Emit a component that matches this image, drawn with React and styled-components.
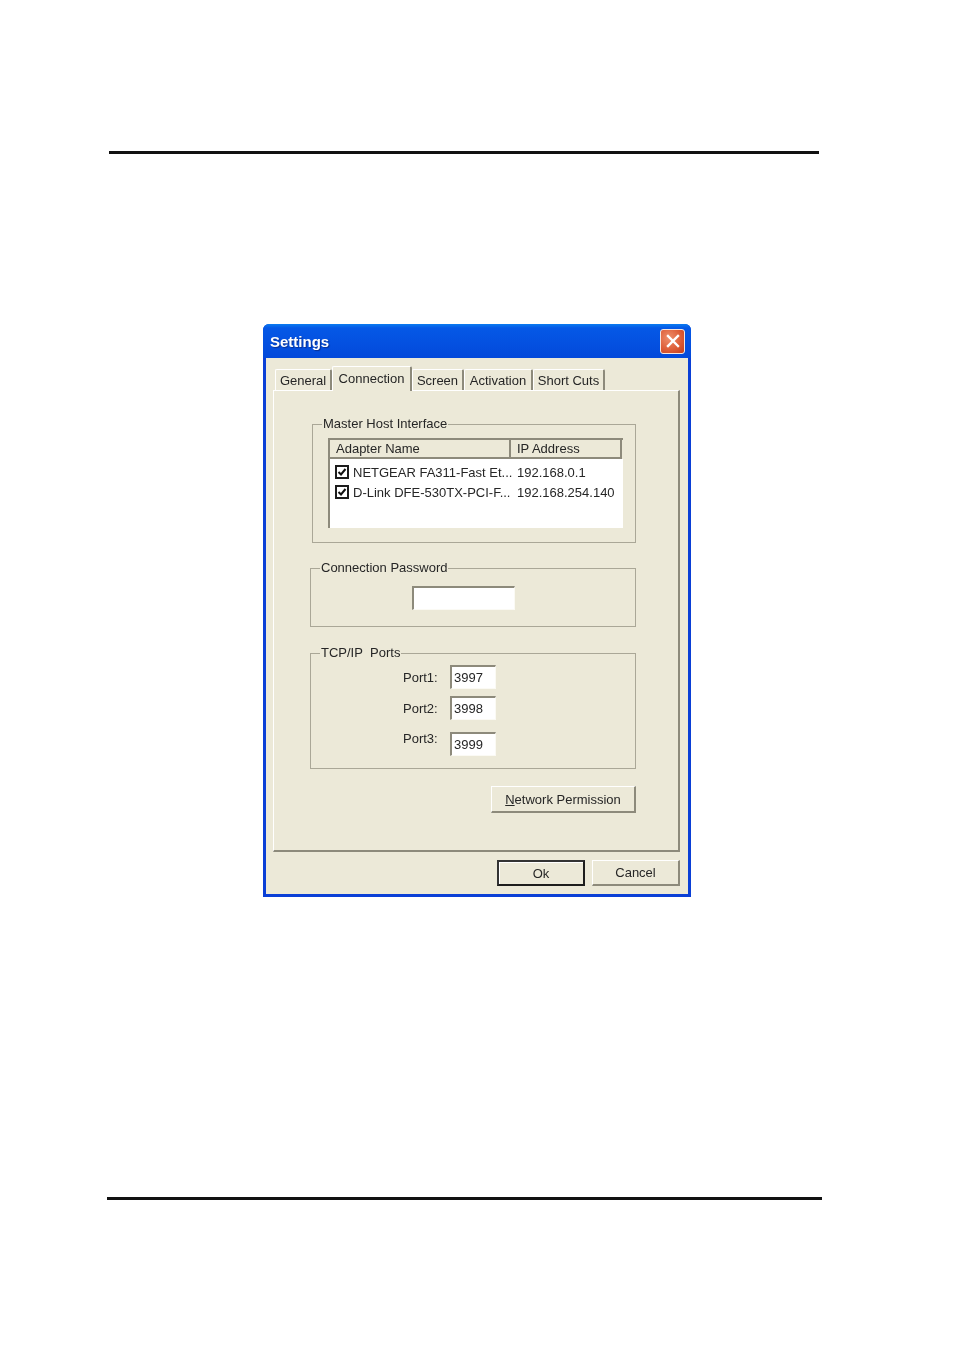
import styled, { createGlobalStyle } from "styled-components"

const GlobalStyle = createGlobalStyle`
  html, body {
    margin: 0;
    background: #fff;
  }
  * {
    box-sizing: border-box;
  }
`

const face = "#ece9d8"
const shade = "#8d8a7b"
const line = "#aaa797"
const ink = "#262626"

const tabs = [
  { name: "General", width: 57 },
  { name: "Connection", width: 80, active: true },
  { name: "Screen", width: 52 },
  { name: "Activation", width: 69 },
  { name: "Short Cuts", width: 72 },
]

const adapters = [
  { name: "NETGEAR FA311-Fast Et...", ip: "192.168.0.1" },
  { name: "D-Link DFE-530TX-PCI-F...", ip: "192.168.254.140" },
]

const ports = [
  { name: "Port1:", value: "3997", gap: 0, lift: 0 },
  { name: "Port2:", value: "3998", gap: 7, lift: 0 },
  { name: "Port3:", value: "3999", gap: 11, lift: 10 },
]

export default function App() {
  return (
    <Styled.Page>
      <GlobalStyle />
      <Styled.TopRule />
      <Styled.Dialog>
        <Styled.TitleBar>
          <Styled.Title>Settings</Styled.Title>
          <Styled.CloseButton>
            <svg width="14" height="14" viewBox="0 0 14 14">
              <path d="M2 2 L12 12 M12 2 L2 12" stroke="#fff" strokeWidth="2.4" strokeLinecap="square" />
            </svg>
          </Styled.CloseButton>
        </Styled.TitleBar>
        <Styled.Body>
          <Styled.TabRow>
            {tabs.map((tab) => (
              <Styled.Tab key={tab.name} $active={tab.active} $width={tab.width}>
                {tab.name}
              </Styled.Tab>
            ))}
          </Styled.TabRow>
          <Styled.Panel>
            <Styled.Group $left={38} $width={324} $height={127}>
              <Styled.Legend $left={9}>Master Host Interface</Styled.Legend>
              <Styled.ListView>
                <Styled.ListHeader>
                  <Styled.HeaderCell $width={181}>Adapter Name</Styled.HeaderCell>
                  <Styled.HeaderCell $width={111}>IP Address</Styled.HeaderCell>
                </Styled.ListHeader>
                {adapters.map((adapter) => (
                  <Styled.ListRow key={adapter.ip}>
                    <Styled.CheckBox>
                      <svg width="10" height="10" viewBox="0 0 10 10">
                        <path d="M1.5 5 L4 7.5 L8.5 2" fill="none" stroke="#111" strokeWidth="2" />
                      </svg>
                    </Styled.CheckBox>
                    <Styled.AdapterName>{adapter.name}</Styled.AdapterName>
                    <span>{adapter.ip}</span>
                  </Styled.ListRow>
                ))}
              </Styled.ListView>
            </Styled.Group>
            <Styled.Group $left={36} $width={326} $height={67} $top={17}>
              <Styled.Legend $left={9}>Connection Password</Styled.Legend>
              <Styled.PasswordField readOnly value="" />
            </Styled.Group>
            <Styled.Group $left={36} $width={326} $height={124} $top={18}>
              <Styled.Legend $left={9}>TCP/IP&nbsp; Ports</Styled.Legend>
              <Styled.PortList>
                {ports.map((port) => (
                  <Styled.PortRow key={port.name} $gap={port.gap}>
                    <Styled.PortLabel $lift={port.lift}>{port.name}</Styled.PortLabel>
                    <Styled.PortField readOnly value={port.value} />
                  </Styled.PortRow>
                ))}
              </Styled.PortList>
            </Styled.Group>
            <Styled.PermissionRow>
              <Styled.Button $width={145} $height={27}>
                <u>N</u>etwork Permission
              </Styled.Button>
            </Styled.PermissionRow>
          </Styled.Panel>
          <Styled.Footer>
            <Styled.DefaultButton>Ok</Styled.DefaultButton>
            <Styled.Button $width={88} $height={26}>Cancel</Styled.Button>
          </Styled.Footer>
        </Styled.Body>
      </Styled.Dialog>
      <Styled.BottomRule />
    </Styled.Page>
  )
}

const Styled = {
  Page: styled.div`
    width: 954px;
    height: 1351px;
    padding-top: 151px;
    overflow: hidden;
    background: #fff;
    font-family: "Liberation Sans", Arial, sans-serif;
    font-size: 13px;
    color: ${ink};
  `,
  TopRule: styled.div`
    width: 710px;
    height: 3px;
    margin-left: 109px;
    background: #111;
  `,
  BottomRule: styled.div`
    width: 715px;
    height: 3px;
    margin: 300px 0 0 107px;
    background: #111;
  `,
  Dialog: styled.div`
    display: flex;
    flex-direction: column;
    width: 428px;
    height: 573px;
    margin: 170px 0 0 263px;
    border-radius: 6px 6px 0 0;
    background: #0a3fd6;
    filter: blur(0.35px);
  `,
  TitleBar: styled.div`
    display: flex;
    align-items: center;
    justify-content: space-between;
    height: 34px;
    padding: 0 6px 0 7px;
    border-radius: 6px 6px 0 0;
    background: linear-gradient(180deg, #0a7cf0 0, #0558e6 4px, #0450e0 20px, #0349da 100%);
  `,
  Title: styled.span`
    font-size: 15px;
    font-weight: 700;
    color: #fff;
    text-shadow: 1px 1px 1px #0a2f90;
  `,
  CloseButton: styled.div`
    display: flex;
    align-items: center;
    justify-content: center;
    width: 25px;
    height: 25px;
    border: 1px solid #f4e6e0;
    border-radius: 3px;
    background: radial-gradient(circle at 35% 35%, #ee8f6c, #dc5a34 60%, #c23d1c);
  `,
  Body: styled.div`
    flex: 1;
    margin: 0 3px 3px;
    padding: 8px 8px 0 7px;
    background: ${face};
  `,
  TabRow: styled.div`
    display: flex;
    height: 24px;
    padding-left: 2px;
  `,
  Tab: styled.div`
    position: relative;
    z-index: ${(p) => (p.$active ? 1 : 0)};
    width: ${(p) => p.$width}px;
    height: ${(p) => (p.$active ? 25 : 21)}px;
    margin-top: ${(p) => (p.$active ? 0 : 3)}px;
    padding-top: ${(p) => (p.$active ? 4 : 3)}px;
    border-top: 1px solid #fff;
    border-left: 1px solid #fff;
    border-right: 2px solid ${shade};
    border-radius: 2px 2px 0 0;
    background: ${face};
    text-align: center;
    line-height: 16px;
    white-space: nowrap;
  `,
  Panel: styled.div`
    width: 407px;
    height: 462px;
    padding-top: 25px;
    border-top: 1px solid #fff;
    border-left: 1px solid #fff;
    border-right: 2px solid ${shade};
    border-bottom: 2px solid ${shade};
  `,
  Group: styled.fieldset`
    width: ${(p) => p.$width}px;
    height: ${(p) => p.$height}px;
    margin: ${(p) => p.$top || 0}px 0 0 ${(p) => p.$left}px;
    padding: 0;
    border: 1px solid ${line};
    min-inline-size: 0;
  `,
  Legend: styled.legend`
    margin-left: ${(p) => p.$left}px;
    padding: 0 1px;
    line-height: 16px;
    white-space: nowrap;
  `,
  ListView: styled.div`
    width: 295px;
    height: 90px;
    margin: 6px 0 0 15px;
    border-top: 2px solid ${shade};
    border-left: 2px solid ${shade};
    background: #fff;
  `,
  ListHeader: styled.div`
    display: flex;
    height: 19px;
    margin-bottom: 3px;
    background: ${face};
  `,
  HeaderCell: styled.div`
    width: ${(p) => p.$width}px;
    padding-left: 6px;
    border-right: 2px solid ${shade};
    border-bottom: 2px solid ${shade};
    line-height: 18px;
  `,
  ListRow: styled.div`
    display: flex;
    align-items: center;
    height: 20px;
    padding-left: 5px;
  `,
  CheckBox: styled.div`
    display: flex;
    align-items: center;
    justify-content: center;
    width: 14px;
    height: 14px;
    margin-right: 4px;
    border: 2px solid #1c1c1c;
    background: #fff;
  `,
  AdapterName: styled.span`
    width: 164px;
    white-space: nowrap;
  `,
  PasswordField: styled.input`
    display: block;
    width: 103px;
    height: 24px;
    margin: 10px 0 0 101px;
    padding: 0;
    border-style: solid;
    border-width: 2px 1px 1px 2px;
    border-color: ${shade} #fbfaf4 #fbfaf4 ${shade};
    background: #fff;
    outline: none;
  `,
  PortList: styled.div`
    margin: 4px 0 0 92px;
  `,
  PortRow: styled.div`
    display: flex;
    align-items: center;
    margin-top: ${(p) => p.$gap}px;
  `,
  PortLabel: styled.span`
    width: 47px;
    margin-bottom: ${(p) => p.$lift}px;
  `,
  PortField: styled.input`
    width: 46px;
    height: 24px;
    padding: 0 0 0 2px;
    border-style: solid;
    border-width: 2px 1px 1px 2px;
    border-color: ${shade} #fbfaf4 #fbfaf4 ${shade};
    background: #fff;
    font: inherit;
    color: ${ink};
    outline: none;
  `,
  PermissionRow: styled.div`
    display: flex;
    margin: 17px 0 0 217px;
  `,
  Button: styled.button`
    width: ${(p) => p.$width}px;
    height: ${(p) => p.$height}px;
    padding: 0;
    border-style: solid;
    border-width: 1px 2px 2px 1px;
    border-color: #fff ${shade} ${shade} #fff;
    background: ${face};
    font: inherit;
    color: ${ink};
  `,
  DefaultButton: styled.button`
    width: 88px;
    height: 26px;
    padding: 0;
    border: 2px solid #1d1d1d;
    border-top-color: #333;
    border-left-color: #333;
    background: ${face};
    box-shadow: inset 1px 1px 0 #fff;
    font: inherit;
    color: ${ink};
  `,
  Footer: styled.div`
    display: flex;
    justify-content: flex-end;
    gap: 7px;
    width: 407px;
    margin-top: 8px;
  `,
}
